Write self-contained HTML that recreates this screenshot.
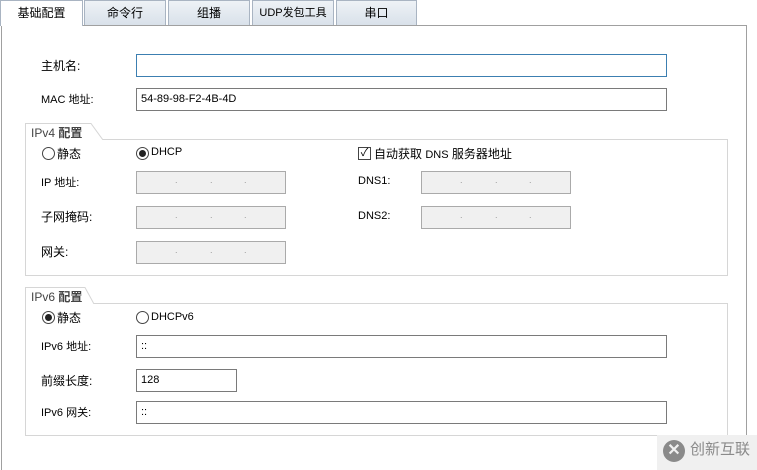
<!DOCTYPE html>
<html style="overflow:hidden;height:470px"><head><meta charset="utf-8"><style>
*{box-sizing:border-box;margin:0;padding:0}
body{width:757px;height:470px;background:#fff;position:relative;overflow:hidden;font-family:"Liberation Sans","Noto Sans CJK SC",sans-serif;font-size:12px;color:#000}
.a{position:absolute}
.tab{position:absolute;top:0;height:25px;border:1px solid #a9b4c2;border-bottom:none;background:linear-gradient(#eef2f6,#d9e1ea);text-align:center;line-height:24px;font-size:12px}
.panel{position:absolute;left:1px;top:25px;width:746px;height:460px;border:1px solid #a0a0a0;background:#fff}
.in{position:absolute;border:1px solid #7a7a7a;background:#fff;height:23px;font-size:11px;line-height:21px;padding-left:4px}
.dis{background:#f0f0f0;border-color:#aaa}
.dis span{position:absolute;top:-2px;color:#999;font-size:9px}
.grp{position:absolute;left:25px;width:703px;border:1px solid #d6d6d6}
.gt{position:absolute;left:25px;height:16px;font-size:12px;color:#444;padding-left:6px;line-height:16px}
.lab{position:absolute;font-size:12px}
.rad{position:absolute;width:13px;height:13px;border:1px solid #444;border-radius:50%;background:#fff}
.rad.on::after{content:"";position:absolute;left:2px;top:2px;width:7px;height:7px;border-radius:50%;background:#222}
</style></head><body>
<div class="panel"></div>
<div class="tab" style="left:0;width:83px;background:#fff;height:26px;z-index:2">基础配置</div>
<div class="tab" style="left:84px;width:82px">命令行</div>
<div class="tab" style="left:168px;width:82px">组播</div>
<div class="tab" style="left:252px;width:82px;font-size:11px">UDP发包工具</div>
<div class="tab" style="left:336px;width:81px">串口</div>

<div class="lab" style="left:41px;top:57px">主机名:</div>
<div class="in" style="left:136px;top:54px;width:531px;border-color:#3c7fb1"></div>
<div class="lab" style="left:41px;top:91px;font-size:11px">MAC 地址:</div>
<div class="in" style="left:136px;top:88px;width:531px">54-89-98-F2-4B-4D</div>

<div class="grp" style="top:139px;height:137px"></div>
<svg class="a" style="left:25px;top:123px" width="80" height="17"><path d="M0.5 17 V0.5 H66 L78 17" fill="#fff" stroke="#d6d6d6"/></svg>
<div class="gt" style="top:125px">IPv4 <b>配置</b></div>
<div class="rad" style="left:42px;top:147px"></div><div class="lab" style="left:57px;top:145px">静态</div>
<div class="rad on" style="left:136px;top:147px"></div><div class="lab" style="left:151px;top:146px;font-size:11px">DHCP</div>
<div class="a" style="left:358px;top:147px;width:13px;height:13px;border:1px solid #444;font-size:11px;line-height:11px;text-align:center">✓</div>
<div class="lab" style="left:374px;top:145px">自动获取 <span style="font-size:11px">DNS</span> 服务器地址</div>

<div class="lab" style="left:41px;top:174px;font-size:11px">IP 地址:</div>
<div class="lab" style="left:41px;top:208px">子网掩码:</div>
<div class="lab" style="left:41px;top:243px">网关:</div>
<div class="lab" style="left:358px;top:175px;font-size:11px">DNS1:</div>
<div class="lab" style="left:358px;top:210px;font-size:11px">DNS2:</div>
<div class="in dis" style="left:136px;top:171px;width:150px"><span style="left:38px">.</span><span style="left:73px">.</span><span style="left:107px">.</span></div>
<div class="in dis" style="left:136px;top:206px;width:150px"><span style="left:38px">.</span><span style="left:73px">.</span><span style="left:107px">.</span></div>
<div class="in dis" style="left:136px;top:241px;width:150px"><span style="left:38px">.</span><span style="left:73px">.</span><span style="left:107px">.</span></div>
<div class="in dis" style="left:421px;top:171px;width:150px"><span style="left:38px">.</span><span style="left:73px">.</span><span style="left:107px">.</span></div>
<div class="in dis" style="left:421px;top:206px;width:150px"><span style="left:38px">.</span><span style="left:73px">.</span><span style="left:107px">.</span></div>

<div class="grp" style="top:303px;height:133px"></div>
<svg class="a" style="left:25px;top:287px" width="80" height="17"><path d="M0.5 17 V0.5 H60 L69 17" fill="#fff" stroke="#d6d6d6"/></svg>
<div class="gt" style="top:289px">IPv6 <b>配置</b></div>
<div class="rad on" style="left:42px;top:311px"></div><div class="lab" style="left:57px;top:309px">静态</div>
<div class="rad" style="left:136px;top:311px"></div><div class="lab" style="left:151px;top:311px;font-size:11px">DHCPv6</div>
<div class="lab" style="left:41px;top:338px;font-size:11px">IPv6 地址:</div>
<div class="in" style="left:136px;top:335px;width:531px">::</div>
<div class="lab" style="left:41px;top:372px">前缀长度:</div>
<div class="in" style="left:136px;top:369px;width:101px">128</div>
<div class="lab" style="left:41px;top:404px;font-size:11px">IPv6 网关:</div>
<div class="in" style="left:136px;top:401px;width:531px">::</div>

<div class="a" style="left:657px;top:435px;width:100px;height:35px;background:#f0f0f0"></div>
<div class="a" style="left:663px;top:440px;width:22px;height:22px;border-radius:50%;background:#8a8a8a;color:#f0f0f0;font-weight:bold;font-size:16px;line-height:22px;text-align:center">✕</div>
<div class="a" style="left:690px;top:438px;font-size:15px;color:#8a8a8a">创新互联</div>
</body></html>
